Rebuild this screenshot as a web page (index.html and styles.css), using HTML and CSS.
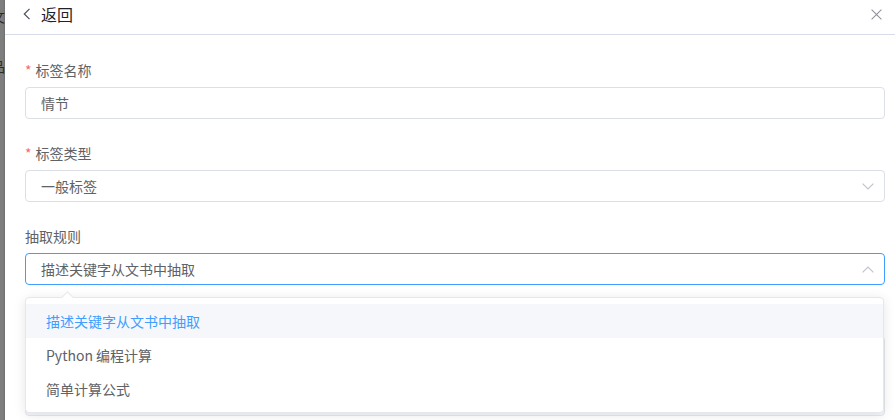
FILE: index.html
```html
<!DOCTYPE html>
<html lang="zh-CN">
<head>
<meta charset="utf-8">
<title>标签</title>
<link rel="stylesheet" href="styles.css">
</head>
<body>
<div class="page">
  <div class="backdrop">
    <span class="frag frag-top">文</span>
    <span class="frag frag-mid">品</span>
  </div>
  <div class="drawer">
    <header class="head">
      <div class="back">
        <svg class="back-icon" width="8" height="12" viewBox="0 0 8 12"><path d="M6.5 0.8 L1.3 6 L6.5 11.2" fill="none" stroke="#4a5060" stroke-width="1.2"/></svg>
        <span class="back-text">返回</span>
      </div>
      <svg class="close-icon" width="11" height="11" viewBox="0 0 11 11"><path d="M0.6 0.6 L10.4 10.4 M10.4 0.6 L0.6 10.4" fill="none" stroke="#909399" stroke-width="1.1"/></svg>
    </header>
    <div class="form">
      <div class="item">
        <div class="label"><span class="star">*</span>标签名称</div>
        <div class="field"><div class="input">情节</div></div>
      </div>
      <div class="item">
        <div class="label"><span class="star">*</span>标签类型</div>
        <div class="field">
          <div class="input select">一般标签
            <svg class="caret" width="12" height="7" viewBox="0 0 12 7"><path d="M0.6 0.6 L6 6 L11.4 0.6" fill="none" stroke="#c0c4cc" stroke-width="1.2"/></svg>
          </div>
        </div>
      </div>
      <div class="item">
        <div class="label">抽取规则</div>
        <div class="field">
          <div class="input select focus">描述关键字从文书中抽取
            <svg class="caret" width="12" height="7" viewBox="0 0 12 7"><path d="M0.6 6.4 L6 1 L11.4 6.4" fill="none" stroke="#c0c4cc" stroke-width="1.2"/></svg>
          </div>
          <div class="dropdown">
            <ul class="options">
              <li class="option hover">描述关键字从文书中抽取</li>
              <li class="option">Python 编程计算</li>
              <li class="option">简单计算公式</li>
            </ul>
          </div>
        </div>
      </div>
      <div class="item">
        <div class="label"></div>
        <div class="field"><div class="input area"></div></div>
      </div>
    </div>
  </div>
</div>
</body>
</html>
```

FILE: styles.css
```css
* { box-sizing: border-box; }
html, body { margin: 0; padding: 0; background: #fff; }
body {
  font-family: "Noto Sans CJK SC", "Noto Sans", sans-serif;
  font-size: 14px;
  color: #606266;
}
.page {
  display: flex;
  width: 895px;
  height: 420px;
  overflow: hidden;
}
.backdrop {
  flex: 0 0 5px;
  background: linear-gradient(to right, #7e7e7e 0, #7e7e7e 3px, #6e6e6e 5px);
  overflow: hidden;
  display: flex;
  flex-direction: column;
}
.frag {
  display: block;
  margin-left: -9px;
  font-size: 14px;
  line-height: 18px;
  color: #2a2a2a;
}
.frag-top { margin-top: 7px; }
.frag-mid { margin-top: 32px; }

.drawer {
  flex: 1;
  background: #fff;
  display: flex;
  flex-direction: column;
}
.head {
  height: 35px;
  border-bottom: 1px solid #d7dce8;
  display: flex;
  align-items: center;
  justify-content: space-between;
  padding: 0 13px 7px 18px;
}
.back {
  display: flex;
  align-items: center;
  gap: 10px;
}
.back-icon { display: block; margin-top: 1px; }
.back-text {
  font-size: 16px;
  line-height: 20px;
  color: #1f2329;
}
.close-icon { display: block; margin-top: 1px; }

.form {
  padding: 18px 10px 0 20px;
  display: flex;
  flex-direction: column;
  gap: 17px;
}
.label {
  height: 34px;
  line-height: 34px;
  font-size: 14px;
  color: #606266;
}
.star {
  color: #f56c6c;
  margin-right: 4px;
}
.field { position: relative; }
.input {
  height: 32px;
  border: 1px solid #dcdfe6;
  border-radius: 4px;
  padding: 0 15px;
  display: flex;
  align-items: center;
  justify-content: space-between;
  color: #606266;
  font-size: 14px;
  background: #fff;
}
.input.focus { border-color: #409eff; }
.caret { display: block; margin-right: -5px; }
.input.area {
  height: 80px;
  background: #f5f7fa;
  border-color: #e4e7ed;
}
.dropdown {
  position: absolute;
  top: 44px;
  left: 0;
  right: 1px;
  z-index: 10;
  background: #fff;
  border: 1px solid #e4e7ed;
  border-radius: 4px;
  box-shadow: 0 2px 12px rgba(0, 0, 0, 0.1);
}
.dropdown::before {
  content: "";
  position: absolute;
  top: -5px;
  left: 37px;
  width: 8px;
  height: 8px;
  background: #fff;
  border-top: 1px solid #e4e7ed;
  border-left: 1px solid #e4e7ed;
  transform: rotate(45deg);
}
.options {
  list-style: none;
  margin: 0;
  padding: 6px 0;
}
.option {
  height: 34px;
  line-height: 34px;
  padding: 0 20px;
  font-size: 14px;
  color: #606266;
}
.option.hover {
  background: #f5f7fa;
  color: #409eff;
}
```
